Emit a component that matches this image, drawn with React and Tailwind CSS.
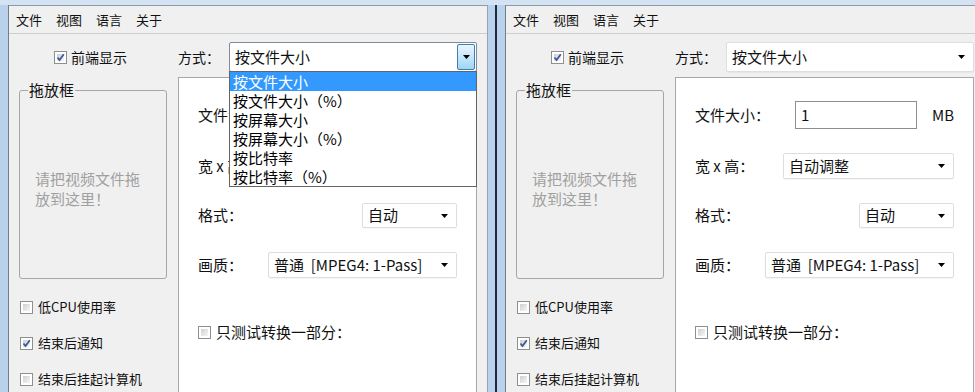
import React from "react";

const items = ["按文件大小", "按文件大小（%）", "按屏幕大小", "按屏幕大小（%）", "按比特率", "按比特率（%）"];

function Arrow() {
  return (
    <svg width="7" height="4" viewBox="0 0 7 4" className="shrink-0">
      <polygon points="0,0 7,0 3.5,4" fill="#000" />
    </svg>
  );
}

function Check({ checked }) {
  return (
    <div className="w-[13px] h-[13px] shrink-0 border border-[#8f8f8f] bg-white p-[2px] relative">
      <div className="w-full h-full bg-linear-to-br from-[#cfcfcf] to-[#f7f7f7]" />
      {checked && (
        <svg width="11" height="11" viewBox="0 0 11 11" className="absolute left-0 top-0">
          <path d="M2.5 5.5 L4.5 8 L8.8 2.2" stroke="#3d5a98" strokeWidth="1.8" fill="none" />
        </svg>
      )}
    </div>
  );
}

function Combo({ className, text, open }) {
  return (
    <div className={`relative h-full bg-white rounded-[2px] flex items-center pl-[5px] pr-[8px] text-[15px] whitespace-pre ${open ? "border border-[#7e8c9c]" : "border border-[#dedede] shadow-[0_1px_1px_rgba(0,0,0,0.04)]"} ${className}`}>
      <span className="flex-1">{text}</span>
      {open ? (
        <div className="absolute right-[1px] top-[1px] bottom-[1px] w-[18px] border border-[#3c7fb1] rounded-[2px] bg-linear-to-b from-[#eaf6fd] via-[#c6e7fa] to-[#9fd5f3] flex items-center justify-center">
          <Arrow />
        </div>
      ) : (
        <Arrow />
      )}
      {open && (
        <div className="absolute left-[-1px] right-[-1px] top-full z-10 bg-white border border-[#646464] text-[15px]">
          {items.map((t, i) => (
            <div key={i} className={`h-[19px] leading-[19px] pl-[3px] ${i === 0 ? "bg-[#3399ff] text-white" : "text-black"}`}>
              {t}
            </div>
          ))}
        </div>
      )}
    </div>
  );
}

function Window({ open }) {
  return (
    <div className="flex shrink-0 h-full">
      {/* left frame */}
      <div className="w-[9px] bg-[#b9d1ea] border-r border-[#6f7d8c]" />

      <div className="w-[478px] bg-[#f0f0f0] border-t border-[#8f9aa5] flex flex-col overflow-hidden">
        {/* MENU */}
        <div className="h-[28px] shrink-0 flex items-center gap-[14px] pl-[7px] text-[13px] border-b border-[#cfcfcf]">
          <span>文件</span>
          <span>视图</span>
          <span>语言</span>
          <span>关于</span>
        </div>

        <div className="flex shrink-0">
          {/* LEFT COLUMN */}
          <div className="w-[169px] pl-[10px]">
            <div className="mt-[8px] h-[30px] flex items-center pl-[35px]">
              <Check checked />
              <span className="ml-[4px] text-[14px]">前端显示</span>
            </div>

            <div className="relative mt-[18px] w-[148px] h-[189px] border border-[#a6a6a6] rounded-[3px]">
              <span className="absolute -top-[11px] left-[8px] px-[1px] bg-[#f0f0f0] text-[15px] leading-[20px]">拖放框</span>
              <div className="pt-[78px] pl-[15px] text-[15px] leading-[20px] text-[#a0a0a0]">
                <div>请把视频文件拖</div>
                <div>放到这里！</div>
              </div>
            </div>

            <div className="mt-[18px] flex flex-col gap-[16px] pl-[1px] text-[13px]">
              <div className="h-[20px] flex items-center">
                <Check />
                <span className="ml-[5px]">低CPU使用率</span>
              </div>
              <div className="h-[20px] flex items-center">
                <Check checked />
                <span className="ml-[5px]">结束后通知</span>
              </div>
              <div className="h-[20px] flex items-center">
                <Check />
                <span className="ml-[5px]">结束后挂起计算机</span>
              </div>
            </div>
          </div>

          {/* RIGHT COLUMN */}
          <div className="w-[299px]">
            <div className="mt-[8px] h-[30px] flex items-center">
              <span className="w-[51px] text-[14px]">方式：</span>
              <Combo className="w-[248px]" text="按文件大小" open={open} />
            </div>

            <div className="mt-[5px] h-[400px] bg-white border border-[#a8a8a8] pt-[23px] pl-[19px] pr-[19px] text-[15px]">
              <div className="h-[28px] flex items-center">
                <span className="w-[100px]">文件大小：</span>
                <div className="w-[122px] h-[28px] border border-[#8d8d8d] bg-white flex items-center pl-[5px]">1</div>
                <span className="ml-auto">MB</span>
              </div>

              <div className="mt-[24px] h-[26px] flex items-center justify-between">
                <span>宽 x 高：</span>
                <Combo className="w-[171px]" text="自动调整" />
              </div>

              <div className="mt-[24px] h-[25px] flex items-center justify-between">
                <span>格式：</span>
                <Combo className="w-[95px]" text="自动" />
              </div>

              <div className="mt-[24px] h-[26px] flex items-center justify-between">
                <span>画质：</span>
                <Combo className="w-[189px]" text="普通  [MPEG4: 1-Pass]" />
              </div>

              <div className="mt-[44px] h-[20px] flex items-center">
                <Check />
                <span className="ml-[5px]">只测试转换一部分：</span>
              </div>
            </div>
          </div>
        </div>
      </div>

      {/* right frame */}
      <div className="w-[10px] bg-[#b9d1ea] border-l border-[#9aa4ae] border-r-2 border-r-[#1f2b3a]" />
    </div>
  );
}

export default function App() {
  return (
    <div className="w-[975px] h-[392px] overflow-hidden bg-[#b9d1ea] font-['Noto_Sans_CJK_SC',sans-serif] text-[#111]">
      <div className="h-[5px] bg-[#d3e3f4]" />
      <div className="flex h-[387px]">
        <Window open />
        <Window />
      </div>
    </div>
  );
}
